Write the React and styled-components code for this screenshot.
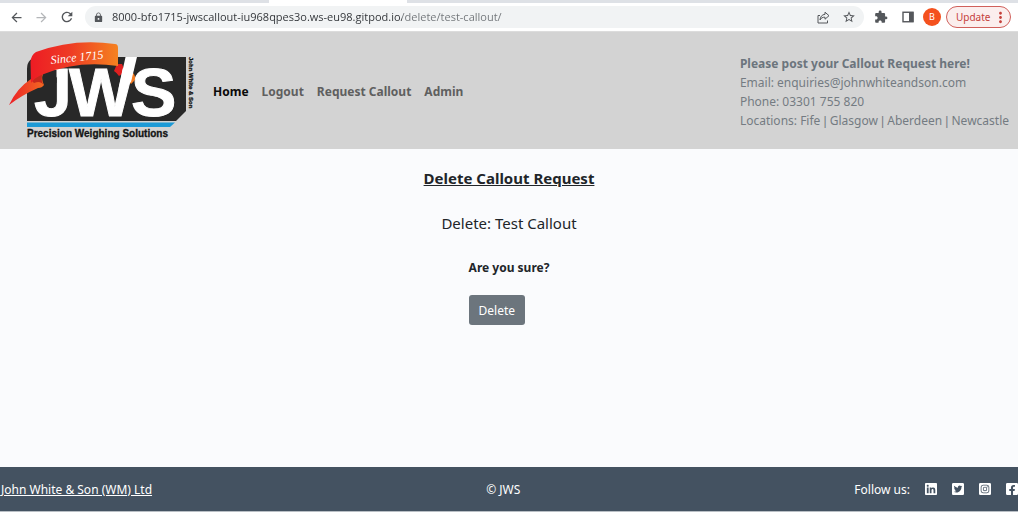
import React from "react";
import styled, { createGlobalStyle } from "styled-components";
import {
  MdArrowBack,
  MdArrowForward,
  MdRefresh,
  MdLock,
  MdStarBorder,
  MdExtension,
  MdMoreVert,
} from "react-icons/md";
import {
  FaLinkedin,
  FaTwitterSquare,
  FaInstagramSquare,
  FaFacebookSquare,
} from "react-icons/fa";

const GlobalStyle = createGlobalStyle`
  * { box-sizing: border-box; }
  body {
    margin: 0;
    background: #fafbfd;
    color: #212529;
    font-family: "Segoe UI", "Noto Sans", sans-serif;
    font-size: 12px;
    line-height: 19px;
  }
  a { color: inherit; text-decoration: none; }
  button { font: inherit; cursor: pointer; }
`;

const Page = styled.div`
  display: flex;
  flex-direction: column;
  min-height: 100vh;
`;

/* Browser chrome */

const TabStrip = styled.div`
  display: flex;
  height: 3px;
  background: #dee1e6;
`;

const ActiveTab = styled.div`
  width: 138px;
  margin-left: 269px;
  background: #fff;
`;

const Toolbar = styled.div`
  display: flex;
  align-items: center;
  height: 29px;
  padding: 0 7px;
  background: #fff;
  border-bottom: 1px solid #dcdcdc;
`;

const NavButtons = styled.div`
  display: flex;
  flex: none;
  margin-right: 9px;
`;

const ToolButton = styled.button`
  display: flex;
  align-items: center;
  justify-content: center;
  flex: none;
  width: ${(p) => p.$width || 26}px;
  height: 22px;
  padding: 0;
  border: 0;
  background: none;
  color: ${(p) => (p.$muted ? "#b4b6b9" : "#54575b")};
`;

const AddressBar = styled.label`
  display: flex;
  align-items: center;
  flex: 1;
  min-width: 0;
  height: 22px;
  padding: 0 2px 0 8px;
  border-radius: 11px;
  background: #f1f3f4;
  color: #54575b;
`;

const AddressInput = styled.input`
  flex: 1;
  min-width: 0;
  height: 20px;
  margin-left: 8px;
  padding: 0;
  border: 0;
  outline: 0;
  font: 11px/20px "Segoe UI", "Open Sans", sans-serif;
  color: #333;
  background: linear-gradient(to right, #2f3236 290px, #707478 290px);
  background-clip: text;
  -webkit-text-fill-color: transparent;
`;

const Avatar = styled.button`
  flex: none;
  width: 18px;
  height: 18px;
  margin: 0 5px;
  padding: 0;
  border: 0;
  border-radius: 50%;
  background: #f4511e;
  color: #fff;
  font-size: 9px;
  line-height: 18px;
`;

const UpdateButton = styled.button`
  display: flex;
  align-items: center;
  justify-content: space-between;
  flex: none;
  width: 65px;
  height: 22px;
  padding: 0 1px 0 9px;
  border: 1px solid #d0605b;
  border-radius: 11px;
  background: #fbeeed;
  color: #c5403a;
  font-size: 10px;
  line-height: 18px;
`;

/* Site header */

const Header = styled.header`
  display: flex;
  align-items: center;
  min-height: 117px;
  padding: 0 9px;
  background: #d3d3d3;
`;

const Brand = styled.a`
  display: block;
  flex: none;
  width: 190px;
  height: 101px;
  svg { display: block; }
`;

const Nav = styled.nav`
  display: flex;
  flex: 1;
  gap: 13px;
  margin-left: 14px;
  padding-top: 2px;
`;

const NavLink = styled.a`
  color: ${(p) => (p.$active ? "#0a0a0a" : "#5f5f5f")};
  font-weight: 700;
  white-space: nowrap;
`;

const Contact = styled.address`
  flex: none;
  padding-top: 4px;
  color: #747b82;
  font-style: normal;
  p { margin: 0; }
  strong { color: #6c757d; }
`;

const Divider = styled.span`
  font-family: "Liberation Sans", sans-serif;
`;

/* Delete page */

const Main = styled.main`
  display: flex;
  flex: 1;
  flex-direction: column;
  align-items: center;
  gap: 24px;
  padding-top: 19px;
`;

const Title = styled.h1`
  margin: 0;
  font-size: 15px;
  font-weight: ${(p) => (p.$plain ? 400 : 700)};
  line-height: 21px;
  text-decoration: ${(p) => (p.$plain ? "none" : "underline")};
`;

const ConfirmForm = styled.form`
  display: flex;
  flex-direction: column;
  align-items: flex-start;
  gap: 18px;
  p { margin: 0; font-weight: 700; }
`;

const DeleteButton = styled.button`
  height: 30px;
  padding: 0 10px;
  border: 0;
  border-radius: 3px;
  background: #6c757d;
  color: #fff;
`;

/* Footer */

const Footer = styled.footer`
  display: flex;
  align-items: center;
  justify-content: space-between;
  height: 45px;
  padding-left: 1px;
  background: #445261;
  border-bottom: 1px solid #b9bfc5;
  color: #fff;
`;

const CompanyLink = styled.a`
  text-decoration: underline;
`;

const Social = styled.div`
  display: flex;
  align-items: center;
  gap: 15px;
  a { display: flex; justify-content: center; width: 12px; }
`;

function ShareIcon() {
  return (
    <svg width="13" height="13" viewBox="0 0 13 13" fill="none" stroke="currentColor" strokeWidth="1" strokeLinejoin="round">
      <path d="M3 4.500H1v7.500h9.500V9.500" />
      <path d="M8 1.200 12 4.700 8 8.200V6.200C5.500 6.100 4 7 3 9c.2-3.300 2-5.400 5-5.700z" />
    </svg>
  );
}

function SidePanelIcon() {
  return (
    <svg width="12" height="12" viewBox="0 0 12 12">
      <rect x="1" y="1.250" width="10" height="9.500" fill="none" stroke="currentColor" strokeWidth="1.400" />
      <rect x="7" y="1" width="4.500" height="10" fill="currentColor" />
    </svg>
  );
}

function Logo() {
  return (
    <svg width="190" height="101" viewBox="9 40 190 101" role="img" aria-label="JWS Precision Weighing Solutions">
      <defs>
        <linearGradient id="ribbon" x1="0" x2="1">
          <stop offset="0" stopColor="#ed1c24" />
          <stop offset="0.45" stopColor="#ee3b24" />
          <stop offset="1" stopColor="#f58220" />
        </linearGradient>
        <linearGradient id="tail" x1="0" x2="1">
          <stop offset="0" stopColor="#ec1f27" />
          <stop offset="1" stopColor="#f26a22" />
        </linearGradient>
      </defs>
      <path d="M27 69Q27 57 40 57H186V111L176 121H27Z" fill="#282828" />
      <path d="M27 122.500H175L170 127H27Z" fill="#1c9ad6" />
      <path d="M117 64H122L125 72L119 76Q117 73 114 71Z" fill="#e02020" />
      <path d="M129 70L134 74L136 79L131 84L127 80Z" fill="#f47b20" />
      <g fill="#fff" fontFamily="Liberation Sans, Arial, sans-serif" fontWeight="700" fontSize="68" stroke="#fff" strokeWidth="1">
        <text x="34" y="116">J</text>
        <text x="69" y="116">W</text>
        <text x="131" y="116">S</text>
      </g>
      <path d="M46 70H56.500V83H46Z" fill="#282828" />
      <path d="M125.500 57H137L131 82L118.500 89Z" fill="#fff" />
      <path d="M31 79L43 74Q41 79 44 85Q42 88 38 88Q22 95 9 105Q17 88 31 79Z" fill="url(#tail)" />
      <path d="M32 81Q36 75 43 72.500Q40 80 44 86Q41 80 34 83Z" fill="#c5281d" />
      <path d="M30.500 62Q31 55 36 52Q74 38 115 44Q118 44 118 48V66Q78 60 44 74Q35 77 31 83Z" fill="url(#ribbon)" />
      <text x="51" y="64" transform="rotate(-6 51 64)" fill="#fff" fontFamily="Liberation Serif, serif" fontStyle="italic" fontSize="12">Since 1715</text>
      <text x="27" y="137" fill="#141414" fontFamily="Liberation Sans, Arial, sans-serif" fontWeight="700" fontSize="10" stroke="#141414" strokeWidth="0.300">Precision Weighing Solutions</text>
      <text x="189" y="57" transform="rotate(90 189 57)" fill="#141414" fontFamily="Liberation Sans, Arial, sans-serif" fontWeight="700" fontSize="6" stroke="#141414" strokeWidth="0.300">John White &amp; Son</text>
    </svg>
  );
}

export default function App() {
  return (
    <Page>
      <GlobalStyle />
      <TabStrip>
        <ActiveTab />
      </TabStrip>
      <Toolbar>
        <NavButtons>
          <ToolButton $width={18} aria-label="Back"><MdArrowBack size={15} /></ToolButton>
          <ToolButton $width={33} $muted aria-label="Forward"><MdArrowForward size={15} /></ToolButton>
          <ToolButton $width={18} aria-label="Reload"><MdRefresh size={16} /></ToolButton>
        </NavButtons>
        <AddressBar>
          <MdLock size={11} />
          <AddressInput
            aria-label="Address"
            defaultValue="8000-bfo1715-jwscallout-iu968qpes3o.ws-eu98.gitpod.io/delete/test-callout/"
          />
          <ToolButton aria-label="Share"><ShareIcon /></ToolButton>
          <ToolButton aria-label="Bookmark"><MdStarBorder size={14} /></ToolButton>
        </AddressBar>
        <ToolButton $width={34} aria-label="Extensions"><MdExtension size={14} /></ToolButton>
        <ToolButton $width={20} aria-label="Side panel"><SidePanelIcon /></ToolButton>
        <Avatar aria-label="Profile">B</Avatar>
        <UpdateButton>
          Update
          <MdMoreVert size={17} />
        </UpdateButton>
      </Toolbar>

      <Header>
        <Brand href="#"><Logo /></Brand>
        <Nav>
          <NavLink href="#" $active>Home</NavLink>
          <NavLink href="#">Logout</NavLink>
          <NavLink href="#">Request Callout</NavLink>
          <NavLink href="#">Admin</NavLink>
        </Nav>
        <Contact>
          <p><strong>Please post your Callout Request here!</strong></p>
          <p>Email: enquiries@johnwhiteandson.com</p>
          <p>Phone: 03301 755 820</p>
          <p>
            Locations: Fife <Divider>|</Divider> Glasgow <Divider>|</Divider> Aberdeen <Divider>|</Divider> Newcastle
          </p>
        </Contact>
      </Header>

      <Main>
        <Title>Delete Callout Request</Title>
        <Title as="h2" $plain>Delete: Test Callout</Title>
        <ConfirmForm onSubmit={(e) => e.preventDefault()}>
          <p>Are you sure?</p>
          <DeleteButton type="submit">Delete</DeleteButton>
        </ConfirmForm>
      </Main>

      <Footer>
        <CompanyLink href="#">John White &amp; Son (WM) Ltd</CompanyLink>
        <span>© JWS</span>
        <Social>
          <span>Follow us:</span>
          <a href="#" aria-label="LinkedIn"><FaLinkedin size={14} /></a>
          <a href="#" aria-label="Twitter"><FaTwitterSquare size={14} /></a>
          <a href="#" aria-label="Instagram"><FaInstagramSquare size={14} /></a>
          <a href="#" aria-label="Facebook"><FaFacebookSquare size={14} /></a>
        </Social>
      </Footer>
    </Page>
  );
}
